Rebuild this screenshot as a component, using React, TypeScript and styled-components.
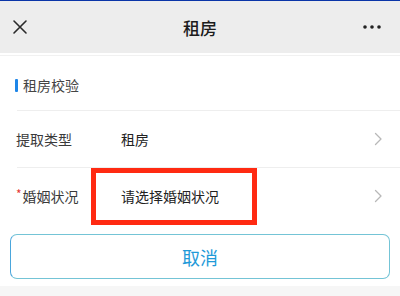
import { createGlobalStyle, styled } from "styled-components";

const Global = createGlobalStyle`
  html, body {
    margin: 0;
    padding: 0;
    background: #ffffff;
  }
  body {
    font-family: "Noto Sans CJK SC", "Noto Sans", sans-serif;
  }
`;

const Page = styled.div`
  width: 400px;
  height: 296px;
  overflow: hidden;
  display: flex;
  flex-direction: column;
  background: #ffffff;
  border-top: 1px solid #0a35a8;
  box-sizing: border-box;
`;

const NavBar = styled.div`
  height: 52px;
  background: #ededed;
  display: grid;
  grid-template-columns: 60px 1fr 60px;
  align-items: center;
  flex-shrink: 0;
`;

const NavTitle = styled.div`
  text-align: center;
  font-size: 17px;
  font-weight: 500;
  color: #1c1c1c;
`;

const NavButton = styled.div<{ $align: "left" | "right" }>`
  display: flex;
  justify-content: ${(p) => (p.$align === "left" ? "flex-start" : "flex-end")};
  padding: ${(p) => (p.$align === "left" ? "0 0 0 12px" : "0 18px 0 0")};
  color: #2a2a2a;
`;

const Rule = styled.div<{ $inset?: number; $top?: number; $color?: string }>`
  height: 1px;
  background: ${(p) => p.$color ?? "#eeeeee"};
  margin-left: ${(p) => p.$inset ?? 0}px;
  margin-top: ${(p) => p.$top ?? 0}px;
  flex-shrink: 0;
`;

const SectionTitle = styled.div`
  height: 54px;
  display: flex;
  align-items: center;
  gap: 5px;
  padding-left: 15px;
  padding-top: 4px;
  box-sizing: border-box;
  font-size: 14px;
  color: #444;

  &::before {
    content: "";
    width: 3px;
    height: 13px;
    border-radius: 1px;
    background: #1e86e8;
  }
`;

const Row = styled.div`
  position: relative;
  height: 56px;
  display: grid;
  grid-template-columns: 105px 1fr 24px;
  align-items: center;
  padding: 0 3px 0 16px;
  font-size: 14px;
  color: #333;
  flex-shrink: 0;
`;

const Label = styled.div`
  color: #3a3a3a;
`;

const Required = styled.span`
  color: #e53935;
  font-size: 12px;
  margin-right: 1px;
  position: relative;
  top: -3px;
`;

const Value = styled.div`
  color: #222;
`;

const Chevron = styled.div`
  display: flex;
  align-items: center;
`;

const Highlight = styled.div`
  position: absolute;
  left: 91px;
  top: 0;
  width: 166px;
  height: 57px;
  border: 5px solid #ff2a12;
  box-sizing: border-box;
  pointer-events: none;
`;

const ButtonArea = styled.div`
  padding: 10px 10px 7px;
  background: #ffffff;
`;

const CancelButton = styled.button`
  width: 100%;
  height: 45px;
  border: 1.5px solid #74c4d6;
  border-left-color: #4aa6dc;
  border-radius: 7px;
  background: #ffffff;
  color: #1e9ad8;
  font-family: "Noto Sans CJK SC", "Noto Sans", sans-serif;
  font-size: 18px;
  display: flex;
  align-items: center;
  justify-content: center;
  padding: 0;
`;

const Footer = styled.div`
  flex: 1;
  background: #f6f6f6;
`;

const CloseIcon = () => (
  <svg width="16" height="16" viewBox="0 0 16 16" fill="none">
    <path d="M2 2 L14 14 M14 2 L2 14" stroke="#2a2a2a" strokeWidth="1.6" strokeLinecap="round" />
  </svg>
);

const MoreIcon = () => (
  <svg width="20" height="6" viewBox="0 0 20 6">
    <circle cx="3" cy="3" r="1.8" fill="#222" />
    <circle cx="10" cy="3" r="1.8" fill="#222" />
    <circle cx="17" cy="3" r="1.8" fill="#222" />
  </svg>
);

const ChevronIcon = () => (
  <svg width="10" height="14" viewBox="0 0 10 14" fill="none">
    <path d="M2.5 1.5 L8 7 L2.5 12.5" stroke="#b8b8b8" strokeWidth="1.3" strokeLinecap="round" strokeLinejoin="round" />
  </svg>
);

export default function App() {
  return (
    <>
      <Global />
      <Page>
        <NavBar>
          <NavButton $align="left">
            <CloseIcon />
          </NavButton>
          <NavTitle>租房</NavTitle>
          <NavButton $align="right">
            <MoreIcon />
          </NavButton>
        </NavBar>
        <Rule $top={2} $color="#f1f1f1" />
        <SectionTitle>租房校验</SectionTitle>
        <Rule $inset={17} />
        <Row>
          <Label>提取类型</Label>
          <Value>租房</Value>
          <Chevron>
            <ChevronIcon />
          </Chevron>
        </Row>
        <Rule $inset={17} />
        <Row>
          <Label>
            <Required>*</Required>婚姻状况
          </Label>
          <Value>请选择婚姻状况</Value>
          <Chevron>
            <ChevronIcon />
          </Chevron>
          <Highlight />
        </Row>
        <ButtonArea>
          <CancelButton>取消</CancelButton>
        </ButtonArea>
        <Footer />
      </Page>
    </>
  );
}
